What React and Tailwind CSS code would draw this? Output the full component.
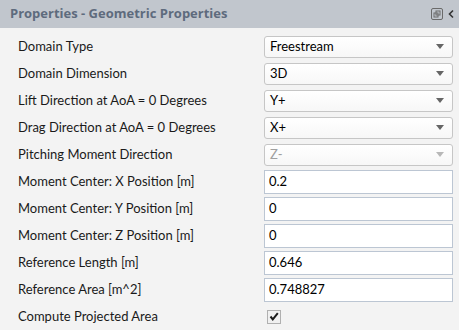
import React from "react";

const rows = [
  { label: "Domain Type", type: "select", value: "Freestream" },
  { label: "Domain Dimension", type: "select", value: "3D" },
  { label: "Lift Direction at AoA = 0 Degrees", type: "select", value: "Y+" },
  { label: "Drag Direction at AoA = 0 Degrees", type: "select", value: "X+" },
  { label: "Pitching Moment Direction", type: "select", value: "Z-", disabled: true },
  { label: "Moment Center: X Position [m]", type: "text", value: "0.2" },
  { label: "Moment Center: Y Position [m]", type: "text", value: "0" },
  { label: "Moment Center: Z Position [m]", type: "text", value: "0" },
  { label: "Reference Length [m]", type: "text", value: "0.646" },
  { label: "Reference Area [m^2]", type: "text", value: "0.748827" },
  { label: "Compute Projected Area", type: "check" },
];

function Field({ row }) {
  if (row.type === "select") {
    return (
      <div
        className={`flex h-[22px] w-full items-center justify-between rounded-[3px] border border-[#c6c6c6] bg-gradient-to-b from-white to-[#f7f7f7] pl-[5px] pr-[8px] ${
          row.disabled ? "text-[#a0a0a0]" : "text-black"
        }`}
      >
        <span>{row.value}</span>
        <svg width="8" height="5" viewBox="0 0 8 5">
          <path d="M0 0h8L4 5z" fill={row.disabled ? "#b8b8b8" : "#666"} />
        </svg>
      </div>
    );
  }
  if (row.type === "text") {
    return (
      <div className="flex h-[24px] w-full items-center border border-[#bcc6d3] bg-white pl-[4px] text-black">
        {row.value}
      </div>
    );
  }
  return (
    <div className="flex h-[24px] items-center pl-[3px]">
      <div className="flex h-[14px] w-[14px] items-center justify-center border border-[#b0b0b0] bg-[#f0f0f0]">
        <svg width="10" height="9" viewBox="0 0 10 9">
          <path d="M1.5 4.5l2.3 2.8L8.8 1.2" stroke="#1a1a1a" strokeWidth="2" fill="none" />
        </svg>
      </div>
    </div>
  );
}

export default function App() {
  return (
    <div className="h-[330px] w-[459px] overflow-hidden bg-[#f3f3f3] font-['Lato',sans-serif] text-[13px]">
      <div className="flex h-[28px] items-center justify-between bg-[#c1c6cd] pl-[10px] pr-[4px]">
        <span className="font-['Open_Sans',sans-serif] text-[13px] font-bold text-[#5e6b7d]">
          Properties - Geometric Properties
        </span>
        <div className="flex items-center gap-[4px]">
          <svg width="12" height="12" viewBox="0 0 12 12">
            <rect x="0.5" y="0.5" width="11" height="11" rx="1.5" fill="none" stroke="#6a6a6a" />
            <rect x="3" y="5" width="4" height="4" fill="none" stroke="#6a6a6a" />
            <rect x="5" y="3" width="4" height="4" fill="none" stroke="#6a6a6a" />
          </svg>
          <svg width="8" height="10" viewBox="0 0 8 10">
            <path d="M6 1.5L2.5 5 6 8.5" stroke="#333" strokeWidth="1.6" fill="none" />
          </svg>
        </div>
      </div>
      <div className="flex flex-col pt-[5px] pr-[6px]">
        {rows.map((row) => (
          <div key={row.label} className="flex h-[27px] items-center">
            <div className="w-[264px] pl-[18px] text-[#1a1a1a]">{row.label}</div>
            <div className="flex-1">
              <Field row={row} />
            </div>
          </div>
        ))}
      </div>
    </div>
  );
}
